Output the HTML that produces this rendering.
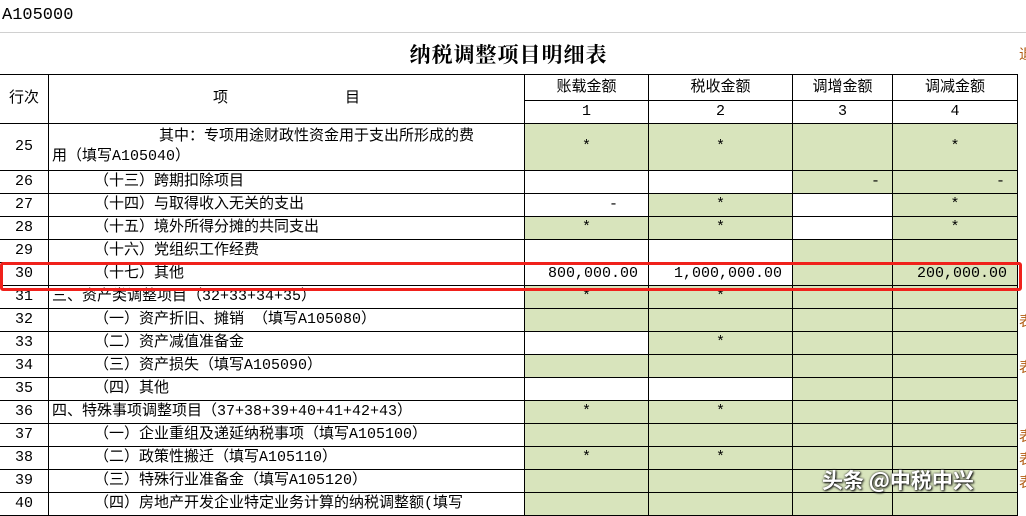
<!DOCTYPE html>
<html><head><meta charset="utf-8"><style>
body{margin:0;width:1026px;height:509px;overflow:hidden;background:#fff;position:relative;font-family:"Liberation Serif","Noto Serif CJK SC",serif;}
.code{position:absolute;left:2px;top:6px;font-size:17px;color:#000;font-family:"Liberation Mono",monospace;}
.hl{position:absolute;left:0;top:32px;width:1026px;height:1px;background:#d0d0d0;}
.title{position:absolute;left:0;width:1017px;top:39px;text-align:center;font-size:21px;font-weight:bold;font-family:"Noto Serif CJK SC",serif;letter-spacing:1px;}
table{position:absolute;left:-1px;top:74px;border-collapse:collapse;table-layout:fixed;font-family:"Liberation Mono","Noto Sans CJK SC",monospace;font-size:15px;}
td{border:1px solid #000;padding:0;height:22px;line-height:20px;white-space:nowrap;overflow:hidden;vertical-align:middle;}
td.n{text-align:center;}
td.c{text-align:center;}
td.r{text-align:right;padding-right:12px;}
.g{background:#d8e4bc;}
.i{padding-left:45px;}
.box{position:absolute;left:0;top:262px;width:1016px;height:23px;border:3px solid #f0211b;border-radius:3px;}
.wm{position:absolute;left:822px;top:465px;font-size:21px;color:#fff;font-family:"Noto Sans CJK SC",sans-serif;font-weight:bold;text-shadow:1px 1px 2px #000,0 0 2px #333;}
.side{position:absolute;left:1019px;font-size:14px;color:#b05a10;font-family:"Noto Sans CJK SC",sans-serif;}
</style></head><body>
<div class="code">A105000</div>
<div class="hl"></div>
<div class="title">纳税调整项目明细表</div>
<table>
<colgroup><col style="width:49px"><col style="width:476px"><col style="width:124px"><col style="width:144px"><col style="width:100px"><col style="width:125px"></colgroup>
<tr><td class="n" rowspan="2" style="height:48px">行次</td><td class="c" rowspan="2">项&nbsp;&nbsp;&nbsp;&nbsp;&nbsp;&nbsp;&nbsp;&nbsp;&nbsp;&nbsp;&nbsp;&nbsp;&nbsp;目</td><td class="c" style="height:25px">账载金额</td><td class="c">税收金额</td><td class="c">调增金额</td><td class="c">调减金额</td></tr>
<tr><td class="c">1</td><td class="c">2</td><td class="c">3</td><td class="c">4</td></tr>
<tr><td class="n" style="height:46px">25</td><td style="white-space:normal;line-height:20px;padding-left:3px"><span style="padding-left:107px">其中：专项用途财政性资金用于支出所形成的费</span><br>用（填写A105040）</td><td class="c g">*</td><td class="c g">*</td><td class="g"></td><td class="c g">*</td></tr>
<tr><td class="n">26</td><td class="i">（十三）跨期扣除项目</td><td></td><td></td><td class="r g">-</td><td class="r g">-</td></tr>
<tr><td class="n">27</td><td class="i">（十四）与取得收入无关的支出</td><td class="r" style="padding-right:30px">-</td><td class="c g">*</td><td></td><td class="c g">*</td></tr>
<tr><td class="n">28</td><td class="i">（十五）境外所得分摊的共同支出</td><td class="c g">*</td><td class="c g">*</td><td></td><td class="c g">*</td></tr>
<tr><td class="n">29</td><td class="i">（十六）党组织工作经费</td><td></td><td></td><td class="g"></td><td class="g"></td></tr>
<tr><td class="n">30</td><td class="i">（十七）其他</td><td class="r" style="padding-right:10px">800,000.00</td><td class="r" style="padding-right:10px">1,000,000.00</td><td class="g"></td><td class="r g" style="padding-right:10px">200,000.00</td></tr>
<tr><td class="n">31</td><td style="padding-left:3px">三、资产类调整项目（32+33+34+35）</td><td class="c g">*</td><td class="c g">*</td><td class="g"></td><td class="g"></td></tr>
<tr><td class="n">32</td><td class="i">（一）资产折旧、摊销 （填写A105080）</td><td class="g"></td><td class="g"></td><td class="g"></td><td class="g"></td></tr>
<tr><td class="n">33</td><td class="i">（二）资产减值准备金</td><td></td><td class="c g">*</td><td class="g"></td><td class="g"></td></tr>
<tr><td class="n">34</td><td class="i">（三）资产损失（填写A105090）</td><td class="g"></td><td class="g"></td><td class="g"></td><td class="g"></td></tr>
<tr><td class="n">35</td><td class="i">（四）其他</td><td></td><td></td><td class="g"></td><td class="g"></td></tr>
<tr><td class="n">36</td><td style="padding-left:3px">四、特殊事项调整项目（37+38+39+40+41+42+43）</td><td class="c g">*</td><td class="c g">*</td><td class="g"></td><td class="g"></td></tr>
<tr><td class="n">37</td><td class="i">（一）企业重组及递延纳税事项（填写A105100）</td><td class="g"></td><td class="g"></td><td class="g"></td><td class="g"></td></tr>
<tr><td class="n">38</td><td class="i">（二）政策性搬迁（填写A105110）</td><td class="c g">*</td><td class="c g">*</td><td class="g"></td><td class="g"></td></tr>
<tr><td class="n">39</td><td class="i">（三）特殊行业准备金（填写A105120）</td><td class="g"></td><td class="g"></td><td class="g"></td><td class="g"></td></tr>
<tr><td class="n">40</td><td class="i">（四）房地产开发企业特定业务计算的纳税调整额(填写</td><td class="g"></td><td class="g"></td><td class="g"></td><td class="g"></td></tr>
</table>
<div class="box"></div>
<div class="side" style="top:44px">退</div>
<div class="side" style="top:311px">表</div>
<div class="side" style="top:357px">表</div>
<div class="side" style="top:426px">表</div>
<div class="side" style="top:449px">表</div>
<div class="side" style="top:472px">表</div>
<div class="wm">头条 @中税中兴</div>
</body></html>
